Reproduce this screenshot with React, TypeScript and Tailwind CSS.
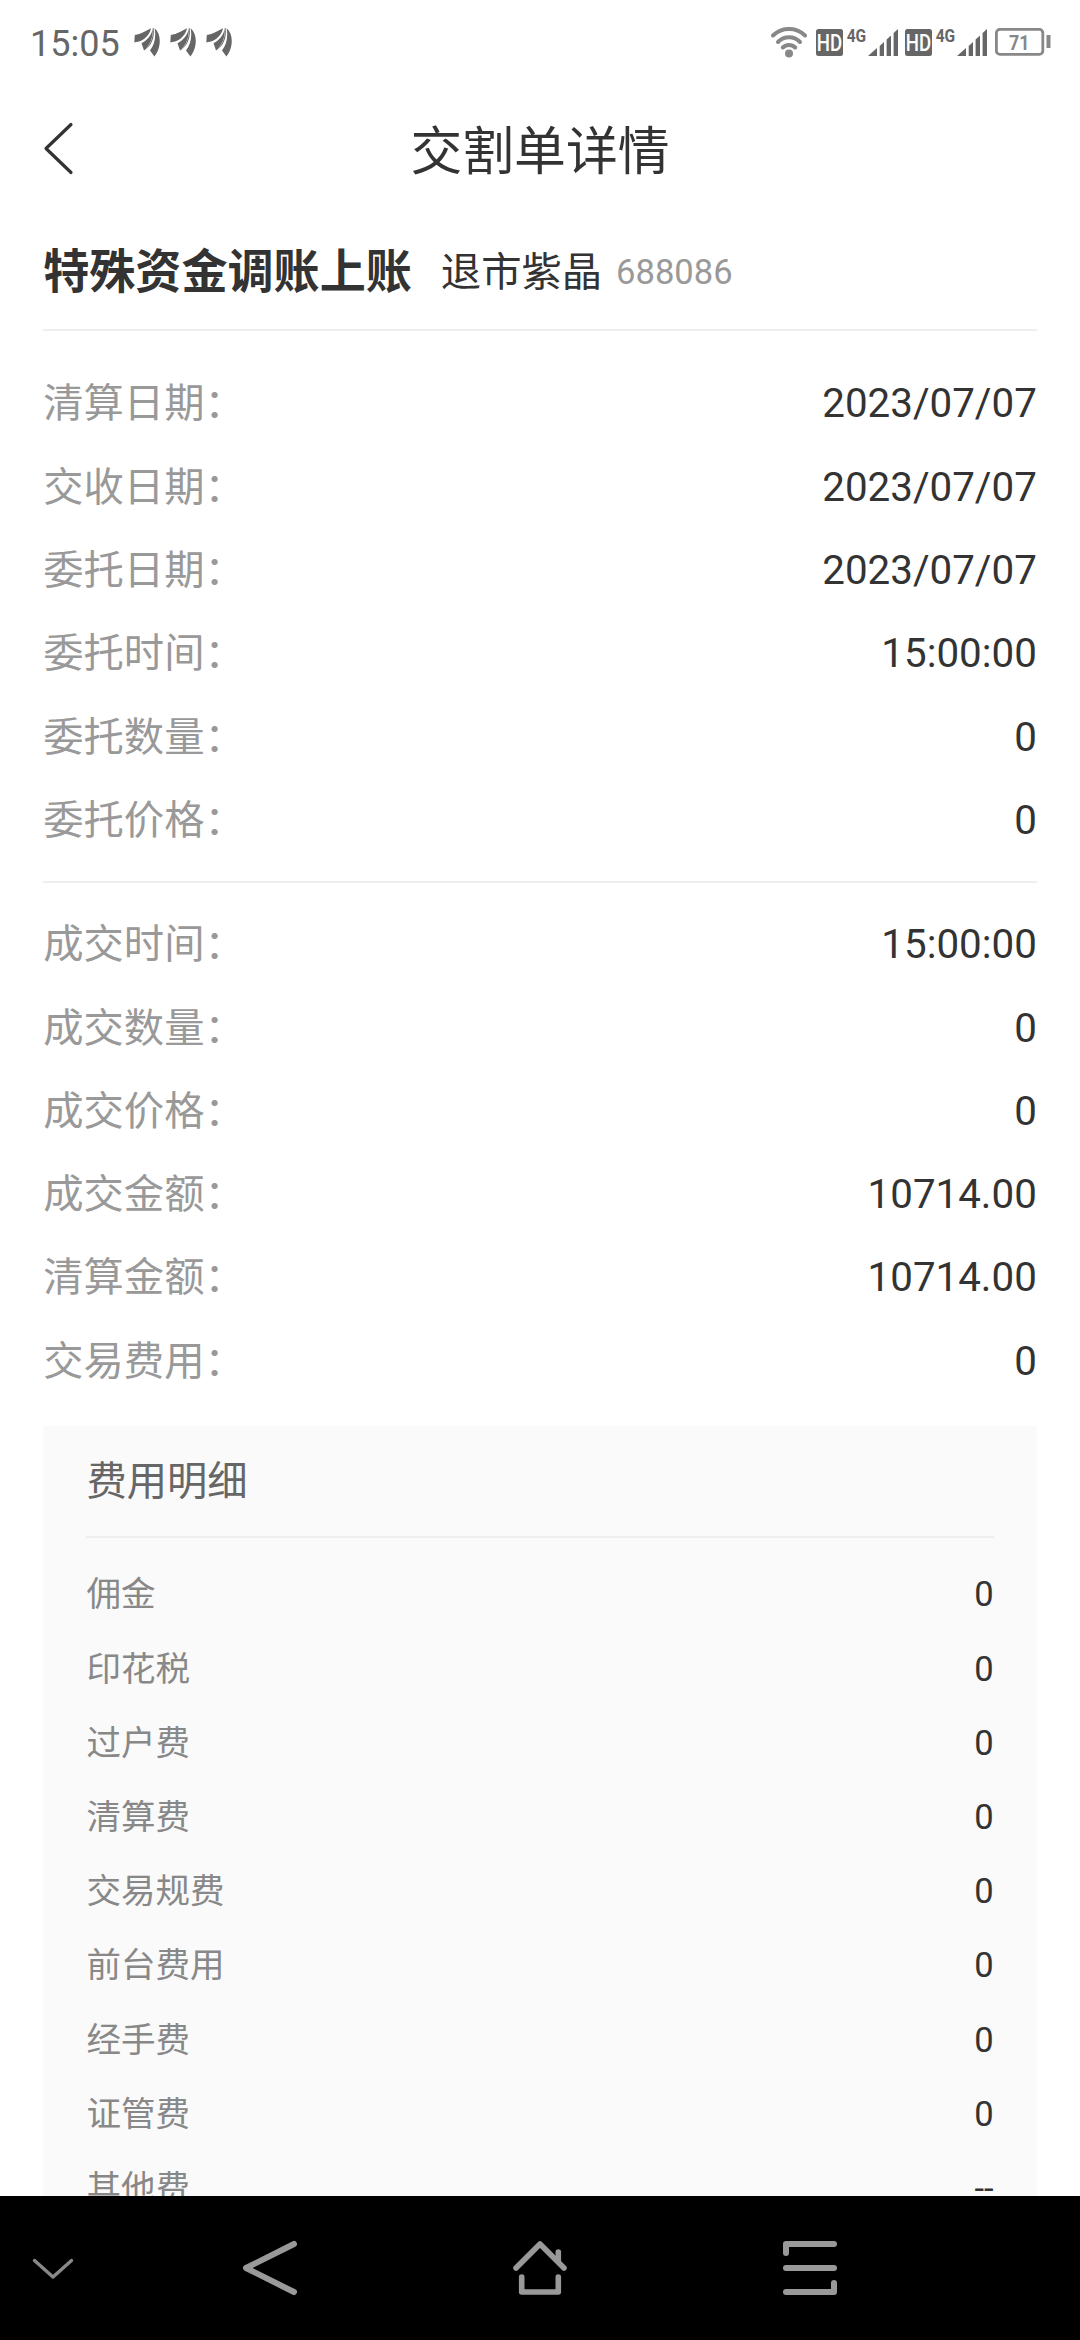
type Item = { label: string; value: string };

const entrustRows: Item[] = [
  { label: '清算日期', value: '2023/07/07' },
  { label: '交收日期', value: '2023/07/07' },
  { label: '委托日期', value: '2023/07/07' },
  { label: '委托时间', value: '15:00:00' },
  { label: '委托数量', value: '0' },
  { label: '委托价格', value: '0' },
];

const dealRows: Item[] = [
  { label: '成交时间', value: '15:00:00' },
  { label: '成交数量', value: '0' },
  { label: '成交价格', value: '0' },
  { label: '成交金额', value: '10714.00' },
  { label: '清算金额', value: '10714.00' },
  { label: '交易费用', value: '0' },
];

const feeRows: Item[] = [
  { label: '佣金', value: '0' },
  { label: '印花税', value: '0' },
  { label: '过户费', value: '0' },
  { label: '清算费', value: '0' },
  { label: '交易规费', value: '0' },
  { label: '前台费用', value: '0' },
  { label: '经手费', value: '0' },
  { label: '证管费', value: '0' },
  { label: '其他费', value: '--' },
];

function LeafIcon() {
  return (
    <svg className="h-[30px] w-[26px]" viewBox="0 0 26 30" fill="#666">
      <path d="M17 1.2C12 4 7 7 0.8 8L0.3 15.5C3 14.6 5 15 7.5 13.6C12.5 10.5 16 6.5 17 1.2Z" />
      <path d="M18.6 1C18 8 13.5 13 7.5 16.2L10 23.5C15.5 19 19.5 11 18.6 1Z" />
      <path d="M19.6 1C21 11 17 18.5 11.5 22.8L9.8 23.8C15.3 20 19.6 12 18.9 1Z" />
      <path d="M20.6 1.2C25 5 26.4 11 25.5 17.5C25 22 23 26 20.4 29.5L16 23.5C20.5 18 22.3 10 20.6 1.2Z" />
    </svg>
  );
}

function WifiIcon() {
  return (
    <svg className="h-[31px] w-[36px]" viewBox="0 0 36 31" fill="none" stroke="#888" strokeWidth="4" strokeLinecap="round">
      <path d="M2 8.5C11 -0.2 25 -0.2 34 8.5" />
      <path d="M7 15C13.2 8.8 22.8 8.8 29 15" />
      <path d="M11.8 20.5C15.3 17 20.7 17 24.2 20.5" />
      <circle cx="18" cy="26.5" r="4" fill="#888" stroke="none" />
    </svg>
  );
}

function HdBadge() {
  return (
    <svg className="h-[27px] w-[27px] overflow-visible" viewBox="0 0 27 27">
      <rect width="27" height="27" rx="2.5" fill="#666" />
      <text x="0.8" y="22" fontFamily="Roboto, sans-serif" fontWeight="500" fontSize="23" fill="#fff" textLength="25.4" lengthAdjust="spacingAndGlyphs">
        HD
      </text>
    </svg>
  );
}

function SignalIcon() {
  return (
    <svg className="h-[27px] w-[51px] overflow-visible" viewBox="0 0 51 27" fill="#666">
      <text x="-0.3" y="13" fontFamily="Roboto, sans-serif" fontWeight="700" fontSize="18.5" textLength="19.5" lengthAdjust="spacingAndGlyphs">
        4G
      </text>
      <path d="M21 27L30 19V27Z" />
      <path d="M32.7 17L37 13V27H32.7Z" />
      <path d="M39.6 10.5L44 6.5V27H39.6Z" />
      <path d="M46.6 4L51 0V27H46.6Z" />
    </svg>
  );
}

function BatteryIcon() {
  return (
    <svg className="h-[28px] w-[56px] overflow-visible" viewBox="0 0 56 28">
      <rect x="1.4" y="1.4" width="46.4" height="25" rx="3.5" fill="none" stroke="#888" strokeWidth="2.8" />
      <rect x="51.5" y="7" width="4" height="13" fill="#888" />
      <text x="14" y="21.5" fontFamily="Roboto, sans-serif" fontWeight="700" fontSize="21" fill="#888" textLength="20.5" lengthAdjust="spacingAndGlyphs">
        71
      </text>
    </svg>
  );
}

function StatusBar() {
  return (
    <div className="flex h-[84px] shrink-0 items-center pr-[29px] pl-[30px] text-[#666]">
      <span className="w-[104px] pt-[3px] text-[36px] leading-none">15:05</span>
      <div className="flex gap-2.5">
        <LeafIcon />
        <LeafIcon />
        <LeafIcon />
      </div>
      <div className="ml-auto flex items-center">
        <WifiIcon />
        <div className="ml-[9px] flex gap-1">
          <HdBadge />
          <SignalIcon />
        </div>
        <div className="mr-2 ml-[7px] flex gap-1">
          <HdBadge />
          <SignalIcon />
        </div>
        <BatteryIcon />
      </div>
    </div>
  );
}

function Row({ label, value }: Item) {
  return (
    <div className="flex h-[83.3px] items-center justify-between text-[40.32px] leading-none">
      <span className="text-[#999]">{label}：</span>
      <span className="text-[#333]">{value}</span>
    </div>
  );
}

function FeeRow({ label, value }: Item) {
  return (
    <div className="flex h-[74.2px] items-center justify-between text-[34.56px] leading-none">
      <span className="text-[#888]">{label}</span>
      <span className="text-[#333]">{value}</span>
    </div>
  );
}

function NavBar() {
  return (
    <nav className="flex h-36 shrink-0 items-center bg-black pl-[32px]">
      <svg className="h-6 w-[42px]" viewBox="0 0 42 24" fill="none" stroke="#888" strokeWidth="3.4" strokeLinecap="round" strokeLinejoin="round">
        <path d="M2.5 4.5L21 21L39.5 4.5" />
      </svg>
      <svg className="ml-[166px] h-[60px] w-[60px]" viewBox="0 0 60 60" fill="none" stroke="#999" strokeWidth="6" strokeLinecap="round" strokeLinejoin="round">
        <path d="M54 6L6 30L54 54" />
      </svg>
      <svg className="ml-[210px] h-[60px] w-[60px]" viewBox="0 0 60 60" fill="none" stroke="#999" strokeWidth="5.6" strokeLinecap="round" strokeLinejoin="round">
        <path d="M6 30L30 6L54 30" />
        <path d="M48.3 14V23" />
        <path d="M11.7 39V54H48.3V39" />
      </svg>
      <svg className="ml-[210px] h-[60px] w-[60px]" viewBox="0 0 60 60" fill="none" stroke="#999" strokeWidth="6" strokeLinecap="round" strokeLinejoin="round">
        <path d="M6 15V6H54" />
        <path d="M6 30H54" />
        <path d="M6 54H54V45" />
      </svg>
    </nav>
  );
}

export default function App() {
  return (
    <div className="flex h-[2340px] w-[1080px] flex-col overflow-hidden bg-white font-['Roboto','Noto_Sans_CJK_SC',sans-serif]">
      <StatusBar />

      {/* Title bar */}
      <header className="flex h-[130px] shrink-0 items-center px-[43px]">
        <svg className="h-[54px] w-8" viewBox="0 0 32 54" fill="none" stroke="#333" strokeWidth="3.2" strokeLinecap="round" strokeLinejoin="round">
          <path d="M28 2.5L3 26.5L28 50.5" />
        </svg>
        <h1 className="flex-1 pt-2 pr-8 text-center text-[51.84px] leading-none text-[#333]">交割单详情</h1>
      </header>

      <main className="min-h-0 flex-1 overflow-hidden px-[43.2px]">
        <div className="flex h-[117px] items-center border-b-2 border-[#eee] pt-0.5 text-[#333]">
          <h2 className="text-[46.08px] leading-none font-bold">特殊资金调账上账</h2>
          <span className="ml-[29px] pt-0.5 text-[40.32px] leading-none">退市紫晶</span>
          <span className="ml-[14px] text-[34.56px] leading-none text-[#999]">688086</span>
        </div>

        <section className="border-b-2 border-[#eee] pt-8 pb-[18px]">
          {entrustRows.map((item) => (
            <Row key={item.label} {...item} />
          ))}
        </section>

        <section className="pt-[21px] pb-[22px]">
          {dealRows.map((item) => (
            <Row key={item.label} {...item} />
          ))}
        </section>

        {/* Fee breakdown */}
        <section className="bg-[#fafafa] px-[43.2px]">
          <h3 className="flex h-[112px] items-center border-b-2 border-[#eee] pt-[3px] text-[40.32px] leading-none text-[#666]">
            费用明细
          </h3>
          <div className="pt-5">
            {feeRows.map((item) => (
              <FeeRow key={item.label} {...item} />
            ))}
          </div>
        </section>
      </main>

      <NavBar />
    </div>
  );
}
